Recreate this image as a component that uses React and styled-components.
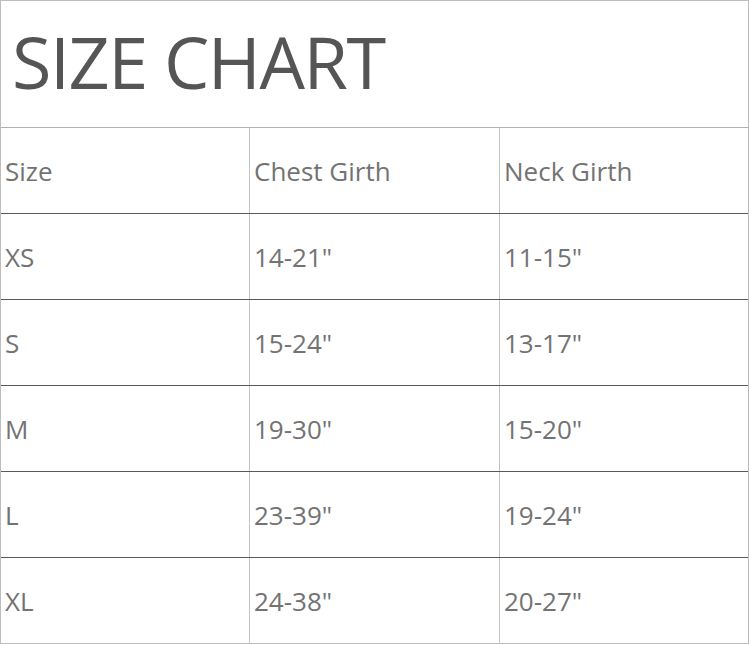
import React from "react";
import { styled, createGlobalStyle } from "styled-components";

const GlobalStyle = createGlobalStyle`
  body {
    margin: 0;
    background: #fff;
    font-family: "Open Sans", "Noto Sans", sans-serif;
  }
`;

const Chart = styled.section`
  width: 747px;
  border: 1px solid #bdbdbd;
  border-bottom: none;
`;

const Title = styled.h1`
  margin: 0;
  height: 126px;
  box-sizing: border-box;
  display: flex;
  align-items: center;
  padding: 0 0 6px 11px;
  border-bottom: 1px solid #b0b0b0;
  font-size: 72px;
  font-weight: 400;
  color: #555;
  letter-spacing: -1.5px;
  height: 127px;
`;

const Row = styled.div`
  display: grid;
  grid-template-columns: 249px 250px 248px;
  height: 85px;
  border-bottom: 1px solid ${(p) => (p.$last ? "#bdbdbd" : "#5a5a5a")};
`;

const Cell = styled.div`
  display: flex;
  align-items: center;
  padding-left: 4px;
  font-size: 26px;
  color: #737373;
  border-right: ${(p) => (p.$end ? "none" : "1px solid #c4c4c4")};
`;

const rows = [
  ["Size", "Chest Girth", "Neck Girth"],
  ["XS", '14-21"', '11-15"'],
  ["S", '15-24"', '13-17"'],
  ["M", '19-30"', '15-20"'],
  ["L", '23-39"', '19-24"'],
  ["XL", '24-38"', '20-27"'],
];

function App() {
  return (
    <>
      <GlobalStyle />
      <Chart>
        <Title>SIZE CHART</Title>
        {rows.map((r, i) => (
          <Row key={i} $last={i === rows.length - 1}>
            {r.map((c, j) => (
              <Cell key={j} $end={j === 2}>
                {c}
              </Cell>
            ))}
          </Row>
        ))}
      </Chart>
    </>
  );
}

export default App;
